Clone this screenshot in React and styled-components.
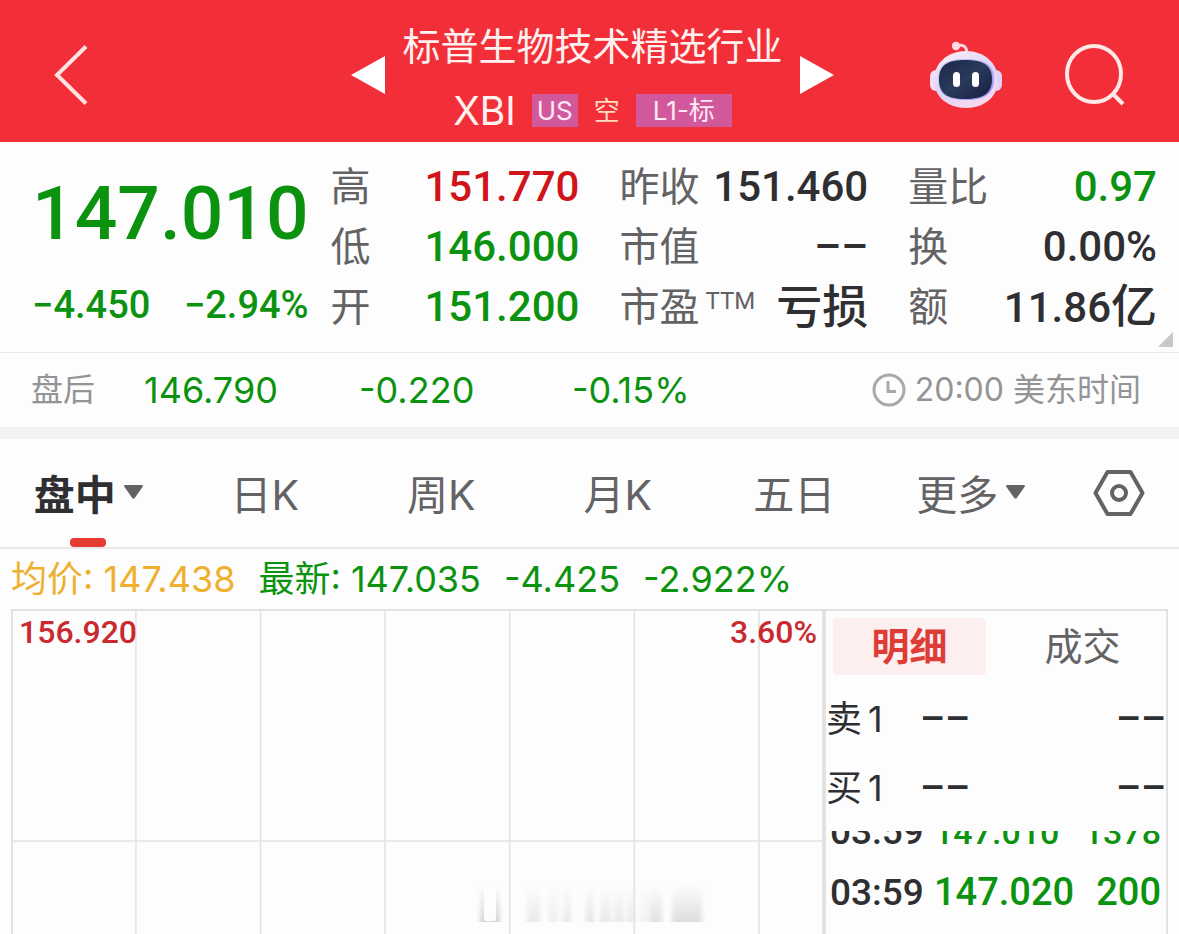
import React from "react";
import styled, {createGlobalStyle} from "styled-components";

const GREEN = '#0b930f';
const RED = '#d0141a';
const DARK = '#2f2f31';
const GRAY = '#636365';

const TEXT_FONT = 'Inter, "Noto Sans CJK SC", sans-serif';
const NUMBER_FONT = 'Roboto, "Noto Sans CJK SC", sans-serif';

const GlobalStyle = createGlobalStyle`
    * {
        box-sizing: border-box;
    }

    body {
        margin: 0;
        background: #fdfdfd;
        font-family: ${TEXT_FONT};
        color: ${DARK};
    }

    button {
        border: 0;
        padding: 0;
        background: none;
        font: inherit;
        color: inherit;
        cursor: pointer;
    }

    svg {
        display: block;
    }
`;

const Page = styled.div`
    display: flex;
    flex-direction: column;
    min-height: 100vh;
    white-space: nowrap;
`;

/* ---- header ---- */

const Header = styled.header`
    display: grid;
    grid-template-columns: 1fr auto 1fr;
    align-items: center;
    padding: 8px 48px 0 54px;
    background: #f22f38;
    color: #fff1f0;
`;

const BackButton = styled.button`
    justify-self: start;
`;

const Switcher = styled.div`
    display: flex;
    align-items: center;
    gap: 17px;
`;

const Heading = styled.div`
    display: flex;
    flex-direction: column;
    align-items: center;
    padding-top: 6px;
`;

const Title = styled.h1`
    margin: 0;
    font-size: 38px;
    font-weight: 400;
    line-height: 64px;
`;

const CodeRow = styled.div`
    display: flex;
    align-items: center;
    gap: 16px;
    height: 64px;
    font-size: 39px;
`;

const Tag = styled.span`
    padding: 0 ${({$wide}) => ($wide ? '17px' : '5px')};
    background: #d2589c;
    color: #ffe9f6;
    font-size: 26px;
    line-height: 33px;
`;

const PlainTag = styled.span`
    color: #ffdcc0;
    font-size: 26px;
    line-height: 33px;
`;

const HeaderTools = styled.div`
    justify-self: end;
    display: flex;
    align-items: center;
    gap: 63px;
`;

/* ---- quote ---- */

const Quote = styled.section`
    position: relative;
    display: flex;
    gap: 22px;
    padding: 15px 22px 15px 32px;
    border-bottom: 1px solid #e9e9e9;
`;

const LastPrice = styled.div`
    flex: 274;
    display: flex;
    flex-direction: column;
    color: ${GREEN};
    font-family: ${NUMBER_FONT};
    font-weight: 500;
`;

const BigPrice = styled.div`
    font-size: 75px;
    line-height: 112px;
    text-align: center;
`;

const Change = styled.div`
    display: flex;
    justify-content: space-between;
    font-size: 38px;
    line-height: 72px;
    height: 68px;
`;

const Stats = styled.dl`
    flex: 829;
    display: grid;
    grid-template-columns: repeat(3, 1fr);
    column-gap: 40px;
    margin: 0;
`;

const Stat = styled.div`
    display: flex;
    align-items: center;
    justify-content: space-between;
    height: 60px;
`;

const StatLabel = styled.dt`
    display: flex;
    align-items: center;
    color: ${GRAY};
    font-size: 40px;
    line-height: 60px;
`;

const StatNote = styled.small`
    padding: 0 0 12px 6px;
    font-family: ${NUMBER_FONT};
    font-size: 24px;
    line-height: 48px;
`;

const StatValue = styled.dd`
    margin: 0;
    color: ${({color}) => color || DARK};
    font-family: ${NUMBER_FONT};
    font-size: ${({$large}) => ($large ? '46px' : '42px')};
    font-weight: 500;
    line-height: 60px;
`;

const HanUnit = styled.span`
    font-size: 46px;
`;

const Corner = styled.svg`
    position: absolute;
    right: 6px;
    bottom: 5px;
`;

const AfterHours = styled.section`
    display: grid;
    grid-template-columns: 113px 215fr 213fr 297fr 272fr;
    padding: 0 38px 0 31px;
    color: ${GREEN};
    font-size: 36px;
    line-height: 74px;
`;

const AfterLabel = styled.span`
    color: #949496;
    font-size: 32px;
`;

const MarketTime = styled.div`
    justify-self: end;
    display: flex;
    align-items: center;
    gap: 9px;
    color: #949496;
    font-size: 32px;
`;

/* ---- tabs ---- */

const TabBar = styled.nav`
    display: flex;
    height: 122px;
    border-top: 12px solid #f3f3f3;
    border-bottom: 2px solid #e9e9e9;
`;

const Tab = styled.button`
    && {
        position: relative;
        flex: 1;
        display: flex;
        align-items: center;
        justify-content: center;
        gap: 8px;
        padding-bottom: 2px;
        color: ${({$active}) => ($active ? DARK : GRAY)};
        font-size: 41px;
        font-weight: ${({$active}) => ($active ? 700 : 400)};
    }

    &::after {
        content: '';
        display: ${({$active}) => ($active ? 'block' : 'none')};
        position: absolute;
        bottom: 0;
        left: calc(50% - 18px);
        width: 36px;
        height: 9px;
        border-radius: 4px;
        background: #e63b33;
    }
`;

const Settings = styled.button`
    && {
        display: flex;
        align-items: center;
        justify-content: center;
        width: 120px;
    }
`;

/* ---- chart ---- */

const Legend = styled.div`
    display: flex;
    gap: 23px;
    height: 60px;
    padding: 0 11px;
    color: ${GREEN};
    font-size: 36px;
    line-height: 60px;
`;

const LegendItem = styled.span`
    color: ${({color}) => color || 'inherit'};
`;

const Panels = styled.div`
    flex: 1;
    display: grid;
    grid-template-columns: 813fr 344fr;
    padding: 0 11px;
`;

const Chart = styled.div`
    position: relative;
    display: flex;
    justify-content: space-between;
    padding: 0 5px 0 6px;
    border: solid #e2e2e2;
    border-width: 2px 2px 0 2px;
    color: #c92a30;
    font-family: ${NUMBER_FONT};
    font-size: 32px;
    font-weight: 500;
    line-height: 42px;
`;

const Grid = styled.svg`
    position: absolute;
    top: 0;
    left: 0;
    width: 100%;
    height: 100%;
`;

const AxisLabel = styled.span`
    position: relative;
`;

const Depth = styled.aside`
    display: flex;
    flex-direction: column;
    border: solid #e2e2e2;
    border-width: 2px 2px 0 2px;
`;

const DepthTabs = styled.div`
    display: grid;
    grid-template-columns: 1fr 1fr;
    gap: 20px;
    padding: 7px 7px 10px;
`;

const DepthTab = styled.button`
    && {
        height: 57px;
        border-radius: 4px;
        background: ${({$active}) => ($active ? '#fdefef' : 'none')};
        color: ${({$active}) => ($active ? '#de3c37' : GRAY)};
        font-size: 38px;
        font-weight: ${({$active}) => ($active ? 700 : 400)};
        line-height: 57px;
    }
`;

const Order = styled.div`
    display: grid;
    grid-template-columns: 94px 1fr auto;
    height: 69px;
    font-family: ${NUMBER_FONT};
    font-size: 39px;
    font-weight: 500;
    line-height: 69px;
`;

const OrderSide = styled.span`
    display: flex;
    gap: 6px;
    font-family: ${TEXT_FONT};
    font-size: 36px;
    font-weight: 400;
`;

const Trades = styled.div`
    flex: 1;
    margin-top: 8px;
    overflow: hidden;
`;

// the list rests half a row down, so its first row is cut by the top edge
const TradeList = styled.div`
    margin-top: -29px;
`;

const Trade = styled.div`
    display: grid;
    grid-template-columns: 104px 1fr auto;
    align-items: baseline;
    height: 60px;
    padding: 0 5px 0 4px;
    font-family: ${NUMBER_FONT};
    font-size: 37px;
    font-weight: 500;
    line-height: 60px;
`;

const TradeValue = styled.span`
    color: ${GREEN};
    font-size: ${({$small}) => ($small ? '34px' : '38px')};
`;

const stats = [
    {label: '高', value: '151.770', color: RED},
    {label: '昨收', value: '151.460'},
    {label: '量比', value: '0.97', color: GREEN},
    {label: '低', value: '146.000', color: GREEN},
    {label: '市值', value: '––'},
    {label: '换', value: '0.00%'},
    {label: '开', value: '151.200', color: GREEN},
    {label: '市盈', note: 'TTM', value: '亏损', large: true},
    {label: '额', value: '11.86', unit: '亿'}
];

const tabs = [
    {text: '盘中', active: true, menu: true},
    {text: '日K'},
    {text: '周K'},
    {text: '月K'},
    {text: '五日'},
    {text: '更多', menu: true}
];

const trades = [
    {time: '03:59', price: '147.010', volume: '1378', small: true},
    {time: '03:59', price: '147.020', volume: '200'}
];

// x, width and strength of the faded bars at the foot of the chart
const smudges = [
    [527, 13, 0.5], [548, 10, 0.35], [563, 8, 0.5], [586, 8, 0.6], [600, 11, 0.5],
    [614, 10, 0.5], [627, 8, 0.5], [640, 10, 0.3], [650, 12, 0.7], [672, 30, 0.8]
];

const Triangle = ({left}) => (
    <svg width="34" height="38" viewBox="0 0 34 38">
        <path d={left ? 'M34 0V38L0 19Z' : 'M0 0V38L34 19Z'} fill="#fff"/>
    </svg>
);

const Caret = () => (
    <svg width="19" height="14" viewBox="0 0 19 14">
        <path d="M1.5 0h16c1.4 0 1.8 1 1 2l-7.4 10.4c-1 1.6-2.2 1.6-3.2 0L.5 2C-.3 1 .1 0 1.5 0Z" fill={GRAY}/>
    </svg>
);

const Robot = () => (
    <svg width="72" height="68" viewBox="0 0 72 68">
        <defs>
            <linearGradient id="shell" x1="0" y1="0" x2="0.5" y2="1">
                <stop offset="0" stopColor="#fff0f6"/>
                <stop offset="0.6" stopColor="#dcd3fa"/>
                <stop offset="1" stopColor="#f4d9ee"/>
            </linearGradient>
            <linearGradient id="rim" x1="0" y1="0" x2="1" y2="1">
                <stop offset="0" stopColor="#c9d0f4"/>
                <stop offset="1" stopColor="#9c8ff0"/>
            </linearGradient>
            <linearGradient id="visor" x1="0" y1="0" x2="1" y2="1">
                <stop offset="0" stopColor="#1c2748"/>
                <stop offset="0.5" stopColor="#2a3a5c"/>
                <stop offset="1" stopColor="#151d40"/>
            </linearGradient>
        </defs>
        <path d="M26 5c7-2 11 0 11 8" fill="none" stroke="#ffd3da" strokeWidth="3"/>
        <circle cx="26" cy="5" r="4.2" fill="#ffdce2"/>
        <rect x="0" y="29" width="12" height="21" rx="6" fill="#f3dcf2"/>
        <rect x="60" y="29" width="12" height="21" rx="6" fill="#e4cdf6"/>
        <path d="M36 10C54 10 68 22 68 39S54 67 36 67 4 56 4 39 18 10 36 10Z" fill="url(#shell)"/>
        <path d="M36 18c19 0 28 6 28 20S56 59 36 59 8 53 8 38 17 18 36 18Z" fill="url(#rim)"/>
        <path d="M35 19c18 0 27 5 27 19S54 58 35 58 9 52 9 38 18 19 35 19Z" fill="url(#visor)"/>
        <rect x="23" y="31" width="7" height="15" rx="3.5" fill="#fff"/>
        <rect x="42" y="31" width="7" height="15" rx="3.5" fill="#fff"/>
    </svg>
);

const ChartGrid = () => (
    <Grid>
        <defs>
            <linearGradient id="fade" x1="0" y1="0" x2="0" y2="1">
                <stop offset="0" stopColor="#bbb" stopOpacity="0"/>
                <stop offset="1" stopColor="#bbb" stopOpacity="0.6"/>
            </linearGradient>
            <filter id="soft" x="-20%" width="140%">
                <feGaussianBlur stdDeviation="2 0"/>
            </filter>
        </defs>
        <g transform="translate(-13 274)" filter="url(#soft)">
            <rect x="480" y="0" width="20" height="37" fill="url(#fade)"/>
            {smudges.map(([x, width, opacity]) => (
                <rect key={x} x={x} y="0" width={width} height="37" fill="url(#fade)" opacity={opacity}/>
            ))}
        </g>
        <rect x="471" y="274" width="12" height="36" rx="2" fill="#fdfdfd"/>
        {[1, 2, 3, 4, 5, 6].map((n) => (
            <line key={n} x1={`${n * 15.4 - 0.2}%`} x2={`${n * 15.4 - 0.2}%`} y1="0" y2="100%" stroke="#e2e2e2" strokeWidth="1.5"/>
        ))}
        <line x1="0" x2="100%" y1="230" y2="230" stroke="#e2e2e2" strokeWidth="1.5"/>
    </Grid>
);

export default function App() {
    return (
        <Page>
            <GlobalStyle/>
            <Header>
                <BackButton aria-label="返回">
                    <svg width="34" height="60" viewBox="0 0 34 60" fill="none" stroke="#ffe3e0" strokeWidth="4">
                        <path d="M32 1.5L3 30L32 58.5"/>
                    </svg>
                </BackButton>
                <Switcher>
                    <button aria-label="上一个"><Triangle left/></button>
                    <Heading>
                        <Title>标普生物技术精选行业</Title>
                        <CodeRow>
                            XBI
                            <Tag>US</Tag>
                            <PlainTag>空</PlainTag>
                            <Tag $wide>L1-标</Tag>
                        </CodeRow>
                    </Heading>
                    <button aria-label="下一个"><Triangle/></button>
                </Switcher>
                <HeaderTools>
                    <button aria-label="助手"><Robot/></button>
                    <button aria-label="搜索">
                        <svg width="66" height="62" viewBox="0 0 66 62" fill="none" stroke="#ffe9e7" strokeWidth="4">
                            <ellipse cx="29" cy="30" rx="27" ry="28"/>
                            <path d="M48 50L58 60"/>
                        </svg>
                    </button>
                </HeaderTools>
            </Header>

            <Quote>
                <LastPrice>
                    <BigPrice>147.010</BigPrice>
                    <Change>
                        <span>−4.450</span>
                        <span>−2.94%</span>
                    </Change>
                </LastPrice>
                <Stats>
                    {stats.map(({label, note, value, unit, color, large}) => (
                        <Stat key={label}>
                            <StatLabel>{label}{note && <StatNote>{note}</StatNote>}</StatLabel>
                            <StatValue color={color} $large={large}>
                                {value}{unit && <HanUnit>{unit}</HanUnit>}
                            </StatValue>
                        </Stat>
                    ))}
                </Stats>
                <Corner width="15" height="15" viewBox="0 0 15 15">
                    <path d="M15 0V15H0Z" fill="#c8c8c8"/>
                </Corner>
            </Quote>

            <AfterHours>
                <AfterLabel>盘后</AfterLabel>
                <span>146.790</span>
                <span>-0.220</span>
                <span>-0.15%</span>
                <MarketTime>
                    <svg width="34" height="34" viewBox="0 0 34 34" fill="none" stroke="#a9a9a9" strokeWidth="3">
                        <circle cx="17" cy="17" r="15"/>
                        <path d="M16 8V18.5H24"/>
                    </svg>
                    20:00 美东时间
                </MarketTime>
            </AfterHours>

            <TabBar>
                {tabs.map(({text, active, menu}) => (
                    <Tab key={text} $active={active}>
                        {text}{menu && <Caret/>}
                    </Tab>
                ))}
                <Settings aria-label="设置">
                    <svg width="52" height="46" viewBox="0 0 52 46" fill="none" stroke={GRAY} strokeWidth="4" strokeLinejoin="round">
                        <path d="M14.5 2H37.5L49.5 23L37.5 44H14.5L2.5 23Z"/>
                        <circle cx="26" cy="23" r="7"/>
                    </svg>
                </Settings>
            </TabBar>

            <Legend>
                <LegendItem color="#eeb02e">均价: 147.438</LegendItem>
                <LegendItem>最新: 147.035</LegendItem>
                <LegendItem>-4.425</LegendItem>
                <LegendItem>-2.922%</LegendItem>
            </Legend>

            <Panels>
                <Chart>
                    <ChartGrid/>
                    <AxisLabel>156.920</AxisLabel>
                    <AxisLabel>3.60%</AxisLabel>
                </Chart>
                <Depth>
                    <DepthTabs>
                        <DepthTab $active>明细</DepthTab>
                        <DepthTab>成交</DepthTab>
                    </DepthTabs>
                    {['卖', '买'].map((side) => (
                        <Order key={side}>
                            <OrderSide><span>{side}</span><span>1</span></OrderSide>
                            <span>––</span>
                            <span>––</span>
                        </Order>
                    ))}
                    <Trades>
                        <TradeList>
                            {trades.map(({time, price, volume, small}) => (
                                <Trade key={price}>
                                    <span>{time}</span>
                                    <TradeValue $small={small}>{price}</TradeValue>
                                    <TradeValue $small={small}>{volume}</TradeValue>
                                </Trade>
                            ))}
                        </TradeList>
                    </Trades>
                </Depth>
            </Panels>
        </Page>
    );
}
